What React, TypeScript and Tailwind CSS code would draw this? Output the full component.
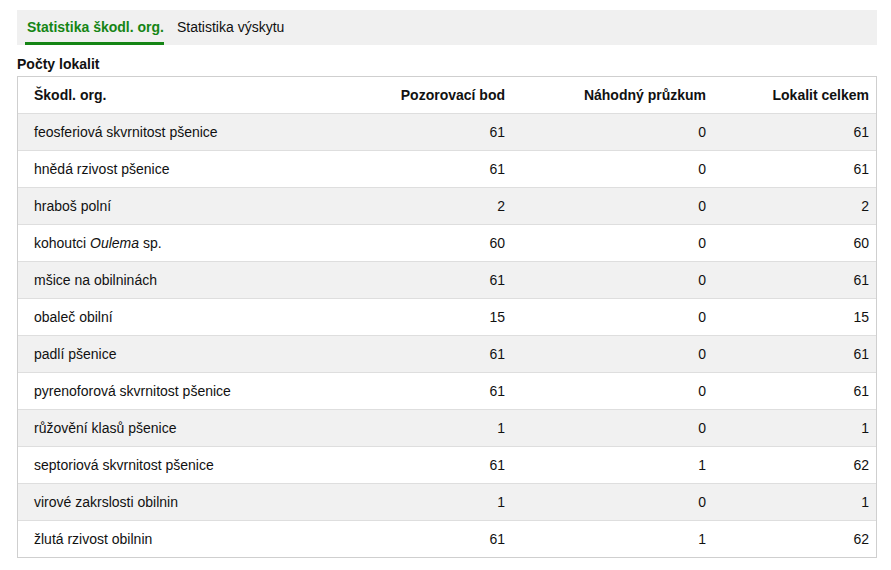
const rows: { name: React.ReactNode; bod: number; pruzkum: number; celkem: number }[] = [
  { name: "feosferiová skvrnitost pšenice", bod: 61, pruzkum: 0, celkem: 61 },
  { name: "hnědá rzivost pšenice", bod: 61, pruzkum: 0, celkem: 61 },
  { name: "hraboš polní", bod: 2, pruzkum: 0, celkem: 2 },
  {
    name: (
      <>
        kohoutci <i>Oulema</i> sp.
      </>
    ),
    bod: 60,
    pruzkum: 0,
    celkem: 60,
  },
  { name: "mšice na obilninách", bod: 61, pruzkum: 0, celkem: 61 },
  { name: "obaleč obilní", bod: 15, pruzkum: 0, celkem: 15 },
  { name: "padlí pšenice", bod: 61, pruzkum: 0, celkem: 61 },
  { name: "pyrenoforová skvrnitost pšenice", bod: 61, pruzkum: 0, celkem: 61 },
  { name: "růžovění klasů pšenice", bod: 1, pruzkum: 0, celkem: 1 },
  { name: "septoriová skvrnitost pšenice", bod: 61, pruzkum: 1, celkem: 62 },
  { name: "virové zakrslosti obilnin", bod: 1, pruzkum: 0, celkem: 1 },
  { name: "žlutá rzivost obilnin", bod: 61, pruzkum: 1, celkem: 62 },
];

const cols = "grid grid-cols-[294px_201px_201px_162px]";

export default function App() {
  return (
    <div
      className="min-h-[570px] bg-white pl-[17px] pr-[14px] pt-[10px] text-[14px] text-[#111]"
      style={{ fontFamily: '"Liberation Sans", Arial, sans-serif' }}
    >
      {/* Tabs */}
      <div className="flex h-[35px] items-stretch bg-[#f0f0f0] pl-[8px]">
        <div className="flex flex-col justify-center">
          <div className="pt-[7px] pl-[2px] pr-0 font-bold text-[#158515]">Statistika škodl. org.</div>
          <div className="mt-[4px] h-[3px] bg-[#158515]" />
        </div>
        <div className="ml-[13px] flex items-center pb-[1px]">Statistika výskytu</div>
      </div>

      <h2 className="mt-[9px] font-bold leading-[20px]">Počty lokalit</h2>

      {/* Table */}
      <div className="mt-[2px] w-[860px] border border-[#cfcfcf]">
        <div className={`${cols} h-[36px] items-center font-bold`}>
          <div className="pl-[16px]">Škodl. org.</div>
          <div className="pr-[8px] text-right">Pozorovací bod</div>
          <div className="pr-[8px] text-right">Náhodný průzkum</div>
          <div className="pr-[7px] text-right">Lokalit celkem</div>
        </div>
        {rows.map((r, i) => (
          <div
            key={i}
            className={`${cols} h-[37px] items-center border-t border-[#dedede] ${
              i % 2 === 0 ? "bg-[#f1f1f1]" : "bg-white"
            }`}
          >
            <div className="pl-[16px]">{r.name}</div>
            <div className="pr-[8px] text-right">{r.bod}</div>
            <div className="pr-[8px] text-right">{r.pruzkum}</div>
            <div className="pr-[7px] text-right">{r.celkem}</div>
          </div>
        ))}
      </div>
    </div>
  );
}
